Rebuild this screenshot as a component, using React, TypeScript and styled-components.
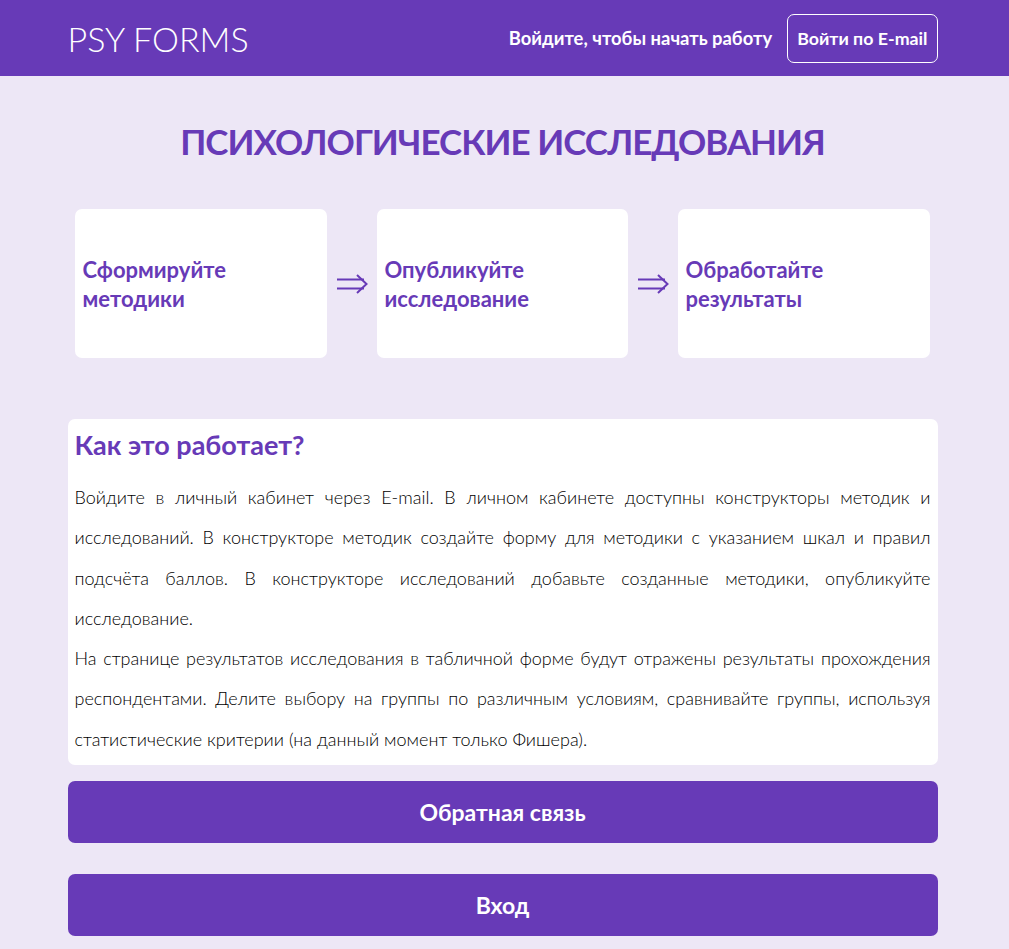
import styled, { createGlobalStyle } from "styled-components";

const GlobalStyle = createGlobalStyle`
  html, body {
    margin: 0;
    padding: 0;
    background: #ede7f6;
    font-family: Lato, "Open Sans", sans-serif;
  }
  * {
    box-sizing: border-box;
  }
`;

const steps = [
  ["Сформируйте", "методики"],
  ["Опубликуйте", "исследование"],
  ["Обработайте", "результаты"],
];

const ArrowIcon = () => (
  <svg width="32" height="20" viewBox="0 0 32 20" fill="none">
    <path d="M1 5.5H28M1 14.5H28" stroke="#673ab7" strokeWidth="2" />
    <path d="M21 1L30.5 10L21 19" stroke="#673ab7" strokeWidth="2" strokeLinejoin="miter" />
  </svg>
);

const App = () => {
  return (
    <>
      <GlobalStyle />
      <Header>
        <HeaderInner>
          <Logo>PSY FORMS</Logo>
          <HeaderRight>
            <HeaderHint>Войдите, чтобы начать работу</HeaderHint>
            <OutlineButton>Войти по E-mail</OutlineButton>
          </HeaderRight>
        </HeaderInner>
      </Header>

      <Main>
        <PageTitle>ПСИХОЛОГИЧЕСКИЕ ИССЛЕДОВАНИЯ</PageTitle>

        <Steps>
          {steps.map(([a, b], i) => (
            <StepGroup key={a}>
              {i > 0 && (
                <Arrow>
                  <ArrowIcon />
                </Arrow>
              )}
              <StepCard>
                <StepText>
                  {a}
                  <br />
                  {b}
                </StepText>
              </StepCard>
            </StepGroup>
          ))}
        </Steps>

        <InfoBox>
          <InfoTitle>Как это работает?</InfoTitle>
          <InfoText>
            Войдите в личный кабинет через E-mail. В личном кабинете доступны
            конструкторы методик и исследований. В конструкторе методик создайте
            форму для методики с указанием шкал и правил подсчёта баллов. В
            конструкторе исследований добавьте созданные методики, опубликуйте
            исследование.
            <br />
            На странице результатов исследования в табличной форме будут
            отражены результаты прохождения респондентами. Делите выбору на
            группы по различным условиям, сравнивайте группы, используя
            статистические критерии (на данный момент только Фишера).
          </InfoText>
        </InfoBox>

        <BigButton>Обратная связь</BigButton>
        <BigButton $gap={31}>Вход</BigButton>
      </Main>
    </>
  );
};

export default App;

const Header = styled.header`
  height: 76px;
  background: #673ab7;
`;

const HeaderInner = styled.div`
  width: 870px;
  height: 100%;
  margin-left: calc(50% - 437px);
  display: flex;
  align-items: center;
  justify-content: space-between;
`;

const Logo = styled.div`
  color: #fff;
  font-size: 34px;
  font-weight: 300;
`;

const HeaderRight = styled.div`
  display: flex;
  align-items: center;
  gap: 15px;
`;

const HeaderHint = styled.span`
  color: #fff;
  font-size: 18.4px;
  font-weight: 700;
`;

const OutlineButton = styled.button`
  height: 49px;
  padding: 0 9px;
  background: transparent;
  border: 1px solid #fff;
  border-radius: 7px;
  color: #fff;
  font-family: inherit;
  font-size: 17.8px;
  font-weight: 700;
  cursor: pointer;
`;

const Main = styled.main`
  width: 870px;
  margin-left: calc(50% - 437px);
  padding-bottom: 12px;
`;

const PageTitle = styled.h1`
  margin: 43px 0 0;
  line-height: 44px;
  text-align: center;
  color: #673ab7;
  font-size: 35px;
  letter-spacing: -1px;
  font-weight: 700;
`;

const Steps = styled.div`
  display: grid;
  grid-template-columns: 252px 301px 302px;
  margin: 46px 0 0;
  padding: 0 7px;
`;

const StepGroup = styled.div`
  display: flex;
  align-items: center;
`;

const Arrow = styled.span`
  width: 50px;
  flex-shrink: 0;
  display: flex;
  justify-content: center;
  padding-left: 1px;
`;

const StepCard = styled.div`
  width: 252px;
  height: 149px;
  display: flex;
  align-items: center;
  padding: 0 8px;
  background: #fff;
  border-radius: 7px;
`;

const StepText = styled.p`
  margin: 0;
  color: #673ab7;
  font-size: 22px;
  font-weight: 700;
  line-height: 29px;
`;

const InfoBox = styled.section`
  margin-top: 61px;
  padding: 8px 7px 6px;
  background: #fff;
  border-radius: 7px;
`;

const InfoTitle = styled.h2`
  margin: 0;
  line-height: 36px;
  color: #673ab7;
  font-size: 27px;
  font-weight: 700;
`;

const InfoText = styled.p`
  margin: 14px 0 0;
  color: #000;
  font-size: 18px;
  font-weight: 300;
  line-height: 40.3px;
  text-align: justify;
`;

const BigButton = styled.button<{ $gap?: number }>`
  display: block;
  width: 100%;
  height: 62px;
  margin-top: ${(p) => p.$gap ?? 16}px;
  background: #673ab7;
  border: none;
  border-radius: 7px;
  color: #fff;
  font-family: inherit;
  font-size: 23px;
  font-weight: 700;
  cursor: pointer;
`;
